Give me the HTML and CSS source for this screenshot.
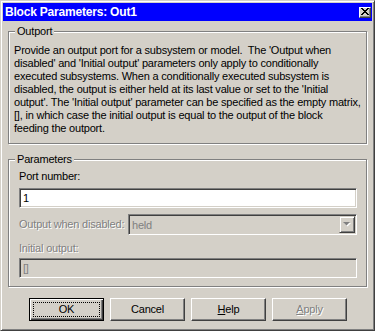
FILE: index.html
```html
<!DOCTYPE html>
<html lang="en">
<head>
  <meta charset="UTF-8" />
  <title>Block Parameters: Out1</title>
  <link rel="stylesheet" href="styles.css">
</head>
<body>
  <div class="window">
    <!-- Title bar -->
    <div class="titlebar">
      <span class="title">Block Parameters: Out1</span>
      <span class="close-btn">
        <svg width="8" height="7" viewBox="0 0 8 7">
          <path d="M0 0h2v1h1v1h2v-1h1v-1h2v1h-1v1h-1v1h-1v1h1v1h1v1h1v1h-2v-1h-1v-1h-2v1h-1v1h-2v-1h1v-1h1v-1h1v-1h-1v-1h-1v-1h-1z" fill="#000"/>
        </svg>
      </span>
    </div>
    <div class="dialog-body">
      <!-- Description -->
      <div class="group outport">
        <span class="group-label">Outport</span>
        <p class="desc">
          Provide an output port for a subsystem or model.&nbsp; The 'Output when<br>
          disabled' and 'Initial output' parameters only apply to conditionally<br>
          executed subsystems. When a conditionally executed subsystem is<br>
          disabled, the output is either held at its last value or set to the 'Initial<br>
          output'. The 'Initial output' parameter can be specified as the empty matrix,<br>
          [], in which case the initial output is equal to the output of the block<br>
          feeding the outport.
        </p>
      </div>
      <!-- Parameters -->
      <div class="group params">
        <span class="group-label">Parameters</span>
        <div class="label">Port number:</div>
        <div class="field port-field">1</div>
        <div class="select-row">
          <span class="label disabled">Output when disabled:</span>
          <div class="field select disabled-field">
            <span class="select-value">held</span>
            <span class="select-arrow">
              <svg width="9" height="5" viewBox="0 0 9 5">
                <path d="M1 1h7l-3.5 3.5z" fill="#fff"/>
                <path d="M0 0h7l-3.5 3.5z" fill="#808080"/>
              </svg>
            </span>
          </div>
        </div>
        <div class="label disabled init-label">Initial output:</div>
        <div class="field disabled-field init-field">[]</div>
      </div>
      <!-- Buttons -->
      <div class="buttons">
        <div class="btn default"><span class="focus">OK</span></div>
        <div class="btn">Cancel</div>
        <div class="btn"><span><u>H</u>elp</span></div>
        <div class="btn disabled"><span><u>A</u>pply</span></div>
      </div>
    </div>
  </div>
</body>
</html>
```

FILE: styles.css
```css
/* Global */
body {
  margin: 0;
  background-color: #d4d0c8;
  font-family: "Liberation Sans", Arial, sans-serif;
  font-size: 11px;
  letter-spacing: -0.2px;
  color: #000;
}
.window {
  width: 375px;
  height: 331px;
  box-sizing: border-box;
  border: 1px solid;
  border-color: #d4d0c8 #404040 #404040 #d4d0c8;
  box-shadow: inset 1px 1px #fff, inset -1px -1px #808080;
  padding: 2px;
}
/* Title bar */
.titlebar {
  height: 18px;
  background-color: #0000ff;
  display: flex;
  align-items: center;
  justify-content: space-between;
  padding: 0 1px 0 2px;
}
.title {
  color: #fff;
  font-weight: bold;
  font-size: 12px;
  letter-spacing: -0.2px;
}
.close-btn {
  width: 12px;
  height: 11px;
  box-sizing: border-box;
  background-color: #d4d0c8;
  border: 1px solid;
  border-color: #fff #404040 #404040 #fff;
  box-shadow: inset -1px -1px #808080;
  display: flex;
  align-items: center;
  justify-content: center;
}
.close-btn svg {
  display: block;
  margin: 0 1px 1px 0;
}
/* Dialog body */
.dialog-body {
  padding: 0 5px;
}
.group {
  position: relative;
  border: 1px solid #808080;
  box-shadow: inset 1px 1px #fff, 1px 1px #fff;
}
.group-label {
  position: absolute;
  top: -7px;
  left: 6px;
  padding: 0 2px;
  line-height: 13px;
  background-color: #d4d0c8;
}
.outport {
  margin-top: 10px;
  padding: 12px 5px 8px;
}
.desc {
  margin: 0;
  line-height: 13px;
  white-space: nowrap;
}
.params {
  margin-top: 15px;
  padding: 10px 9px 8px 10px;
}
.label {
  line-height: 13px;
}
.disabled {
  color: #808080;
  text-shadow: 1px 1px #fff;
}
/* Edit fields */
.field {
  box-sizing: border-box;
  height: 20px;
  border: 1px solid;
  border-color: #808080 #fff #fff #808080;
  box-shadow: inset 1px 1px #404040, inset -1px -1px #d4d0c8;
  background-color: #fff;
  padding: 0 3px;
  line-height: 18px;
}
.port-field {
  margin-top: 5px;
}
.disabled-field {
  background-color: #d4d0c8;
  color: #808080;
}
.select-row {
  display: flex;
  align-items: center;
  margin-top: 6px;
}
.select-row .label {
  width: 109px;
}
.select {
  flex: 1;
  height: 21px;
  display: flex;
  align-items: center;
  justify-content: space-between;
  padding: 0 1px 0 3px;
}
.select-arrow {
  width: 16px;
  height: 17px;
  box-sizing: border-box;
  border: 1px solid;
  border-color: #d4d0c8 #404040 #404040 #d4d0c8;
  box-shadow: inset 1px 1px #fff, inset -1px -1px #808080;
  display: flex;
  align-items: center;
  justify-content: center;
}
.select-arrow svg {
  display: block;
}
.init-label {
  margin-top: 7px;
}
.init-field {
  margin-top: 3px;
}
/* Buttons */
.buttons {
  display: flex;
  gap: 6px;
  margin-top: 11px;
  padding-left: 21px;
}
.btn {
  width: 75px;
  height: 23px;
  box-sizing: border-box;
  border: 1px solid;
  border-color: #fff #404040 #404040 #fff;
  box-shadow: inset -1px -1px #808080;
  display: flex;
  align-items: center;
  justify-content: center;
  line-height: 13px;
}
.btn.default {
  border-color: #000;
  box-shadow: inset 1px 1px #fff, inset -1px -1px #404040, inset -2px -2px #808080;
}
.focus {
  width: 67px;
  height: 15px;
  box-sizing: border-box;
  border: 1px dotted #000;
  display: flex;
  align-items: center;
  justify-content: center;
}
```
